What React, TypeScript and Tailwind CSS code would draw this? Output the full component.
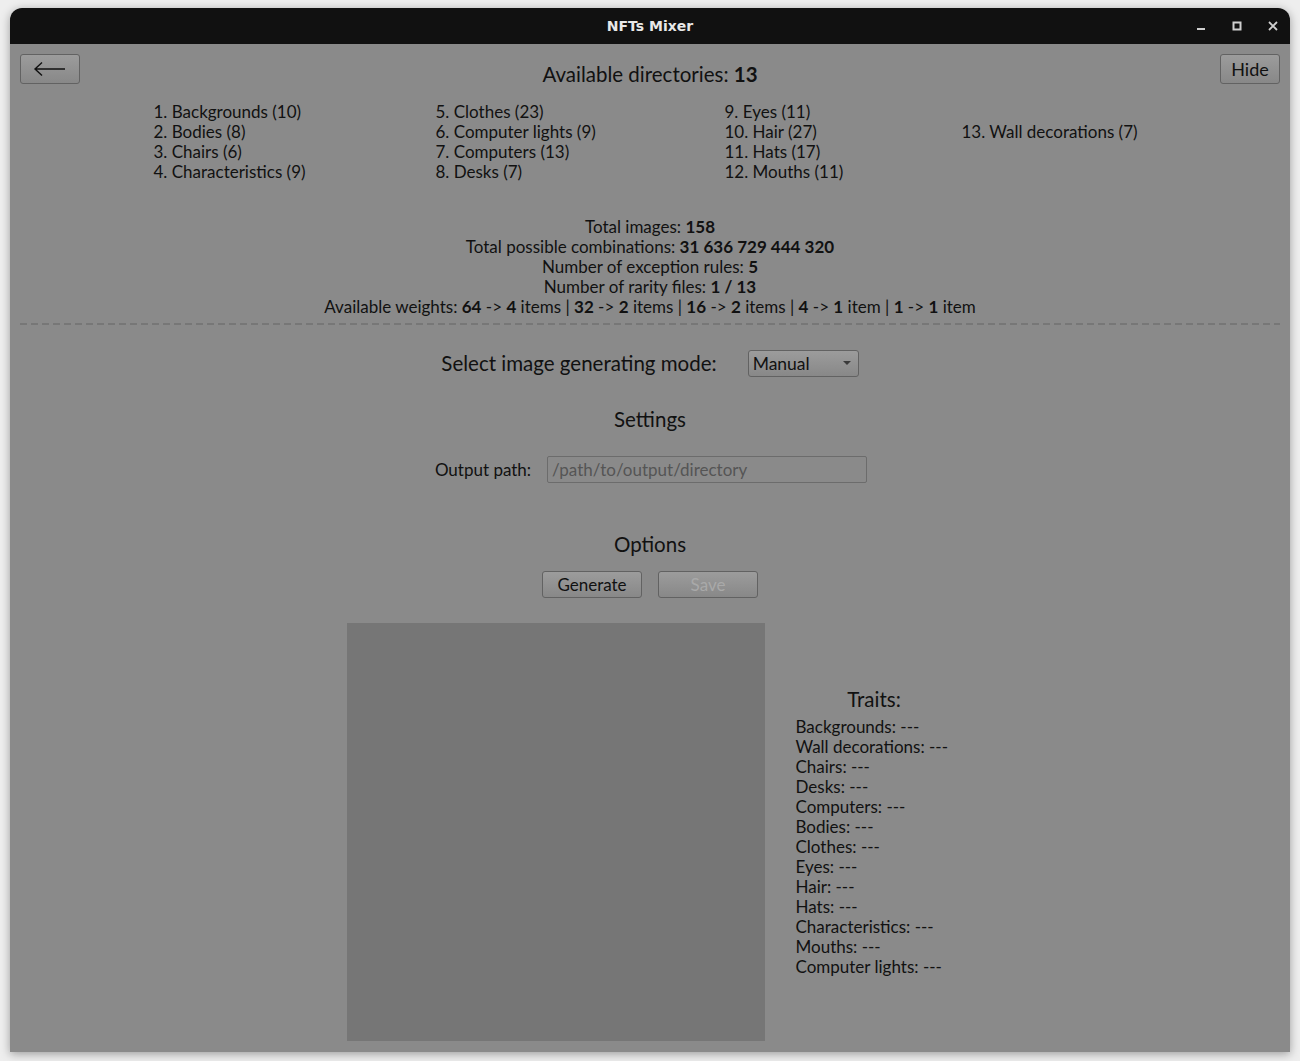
import React from "react";

const dirs: string[][] = [
  ["1. Backgrounds (10)", "2. Bodies (8)", "3. Chairs (6)", "4. Characteristics (9)"],
  ["5. Clothes (23)", "6. Computer lights (9)", "7. Computers (13)", "8. Desks (7)"],
  ["9. Eyes (11)", "10. Hair (27)", "11. Hats (17)", "12. Mouths (11)"],
  ["", "13. Wall decorations (7)"],
];

const traits = [
  "Backgrounds",
  "Wall decorations",
  "Chairs",
  "Desks",
  "Computers",
  "Bodies",
  "Clothes",
  "Eyes",
  "Hair",
  "Hats",
  "Characteristics",
  "Mouths",
  "Computer lights",
];

const btn =
  "h-[27px] rounded-[3px] border border-[#626262] bg-gradient-to-b from-[#9c9c9c] to-[#888888] text-[17px] leading-none";

const App: React.FC = () => {
  return (
    <div
      className="w-[1300px] h-[1061px] bg-[#eeeeee] pt-[8px] px-[10px] overflow-hidden"
      style={{ fontFamily: "Lato, 'Open Sans', sans-serif" }}
    >
      <div className="w-[1280px] h-[1044px] rounded-t-[12px] overflow-hidden shadow-[0_2px_10px_rgba(0,0,0,0.35)] flex flex-col">
        {/* Barra de título */}
        <div className="relative h-[36px] bg-[#111111] flex items-center justify-center flex-shrink-0">
          <span
            className="text-[14px] font-bold text-[#e8e8e8]"
            style={{ fontFamily: "'DejaVu Sans', sans-serif" }}
          >
            NFTs Mixer
          </span>
          <div className="absolute right-[12px] top-0 h-full flex items-center gap-[26px] text-[#cfcfcf]">
            <svg width="10" height="10" viewBox="0 0 10 10">
              <rect x="1" y="7" width="8" height="2" fill="currentColor" />
            </svg>
            <svg width="10" height="10" viewBox="0 0 10 10">
              <rect x="1.5" y="1.5" width="7" height="7" fill="none" stroke="currentColor" strokeWidth="2" />
            </svg>
            <svg width="10" height="10" viewBox="0 0 10 10">
              <path d="M1 1L9 9M9 1L1 9" stroke="currentColor" strokeWidth="1.8" />
            </svg>
          </div>
        </div>

        {/* Contenido */}
        <div className="flex-1 bg-[#8a8a8a] text-[#111111] px-[10px] pt-[10px] flex flex-col">
          <div className="flex items-start justify-between h-[30px]">
            <button className={`${btn} w-[60px] h-[30px] flex items-center justify-center`}>
              <svg width="34" height="16" viewBox="0 0 34 16">
                <path d="M2 8H32M9 1.5L2 8L9 14.5" fill="none" stroke="#111" strokeWidth="1.4" />
              </svg>
            </button>
            <div className="mt-[8px] text-[20.5px] leading-[24px]">
              Available directories: <span className="font-bold">13</span>
            </div>
            <button className={`${btn} w-[60px] h-[30px] text-[18px]`}>Hide</button>
          </div>

          <div className="mt-[18px] mx-auto grid grid-cols-[282px_289px_237px_185px] text-[17px] leading-[20px]">
            {dirs.map((col, i) => (
              <div key={i} className="flex flex-col">
                {col.map((t, j) => (
                  <div key={j} className="h-[20px] whitespace-nowrap">
                    {t}
                  </div>
                ))}
              </div>
            ))}
          </div>

          <div className="mt-[35px] flex flex-col items-center text-[17px] leading-[20px]">
            <div>
              Total images: <b>158</b>
            </div>
            <div>
              Total possible combinations: <b>31 636 729 444 320</b>
            </div>
            <div>
              Number of exception rules: <b>5</b>
            </div>
            <div>
              Number of rarity files: <b>1 / 13</b>
            </div>
            <div>
              Available weights: <b>64</b> -&gt; <b>4</b> items | <b>32</b> -&gt; <b>2</b> items |{" "}
              <b>16</b> -&gt; <b>2</b> items | <b>4</b> -&gt; <b>1</b> item | <b>1</b> -&gt; <b>1</b> item
            </div>
          </div>

          <div className="mt-[6px] h-[2px] bg-[repeating-linear-gradient(90deg,#777777_0_7px,transparent_7px_11px)]" />

          <div className="mt-[23px] flex items-center justify-center gap-[31px]">
            <span className="text-[20.5px]">Select image generating mode:</span>
            <div className={`${btn} w-[111px] flex items-center justify-between pl-[4px] pr-[7px]`}>
              <span className="text-[17.5px]">Manual</span>
              <svg width="8" height="5" viewBox="0 0 8 5">
                <path d="M0 0H8L4 4Z" fill="#3a3a3a" />
              </svg>
            </div>
          </div>

          <div className="mt-[28px] text-center text-[20.5px] leading-[24px]">Settings</div>

          <div className="mt-[25px] flex items-center justify-center gap-[16px] pl-[2px]">
            <span className="text-[17px]">Output path:</span>
            <div className="w-[320px] h-[27px] rounded-[2px] border border-[#6c6c6c] flex items-center px-[4px] text-[17px] text-[#555555]">
              /path/to/output/directory
            </div>
          </div>

          <div className="mt-[49px] text-center text-[20.5px] leading-[24px]">Options</div>

          <div className="mt-[15px] flex justify-center gap-[16px]">
            <button className={`${btn} w-[100px]`}>Generate</button>
            <button className={`${btn} w-[100px] text-[#a9a9a9] border-[#7a7a7a]`}>Save</button>
          </div>

          <div className="mt-[25px] flex items-center justify-center gap-[31px] pr-[1px]">
            <div className="w-[418px] h-[418px] bg-[#767676]" />
            <div className="flex flex-col text-[17px] leading-[20px] w-[157px]">
              <div className="text-center text-[20.5px] leading-[24px] mb-[6px]">Traits:</div>
              {traits.map((t) => (
                <div key={t} className="whitespace-nowrap">
                  {t}: ---
                </div>
              ))}
            </div>
          </div>
        </div>
      </div>
    </div>
  );
};

export default App;
